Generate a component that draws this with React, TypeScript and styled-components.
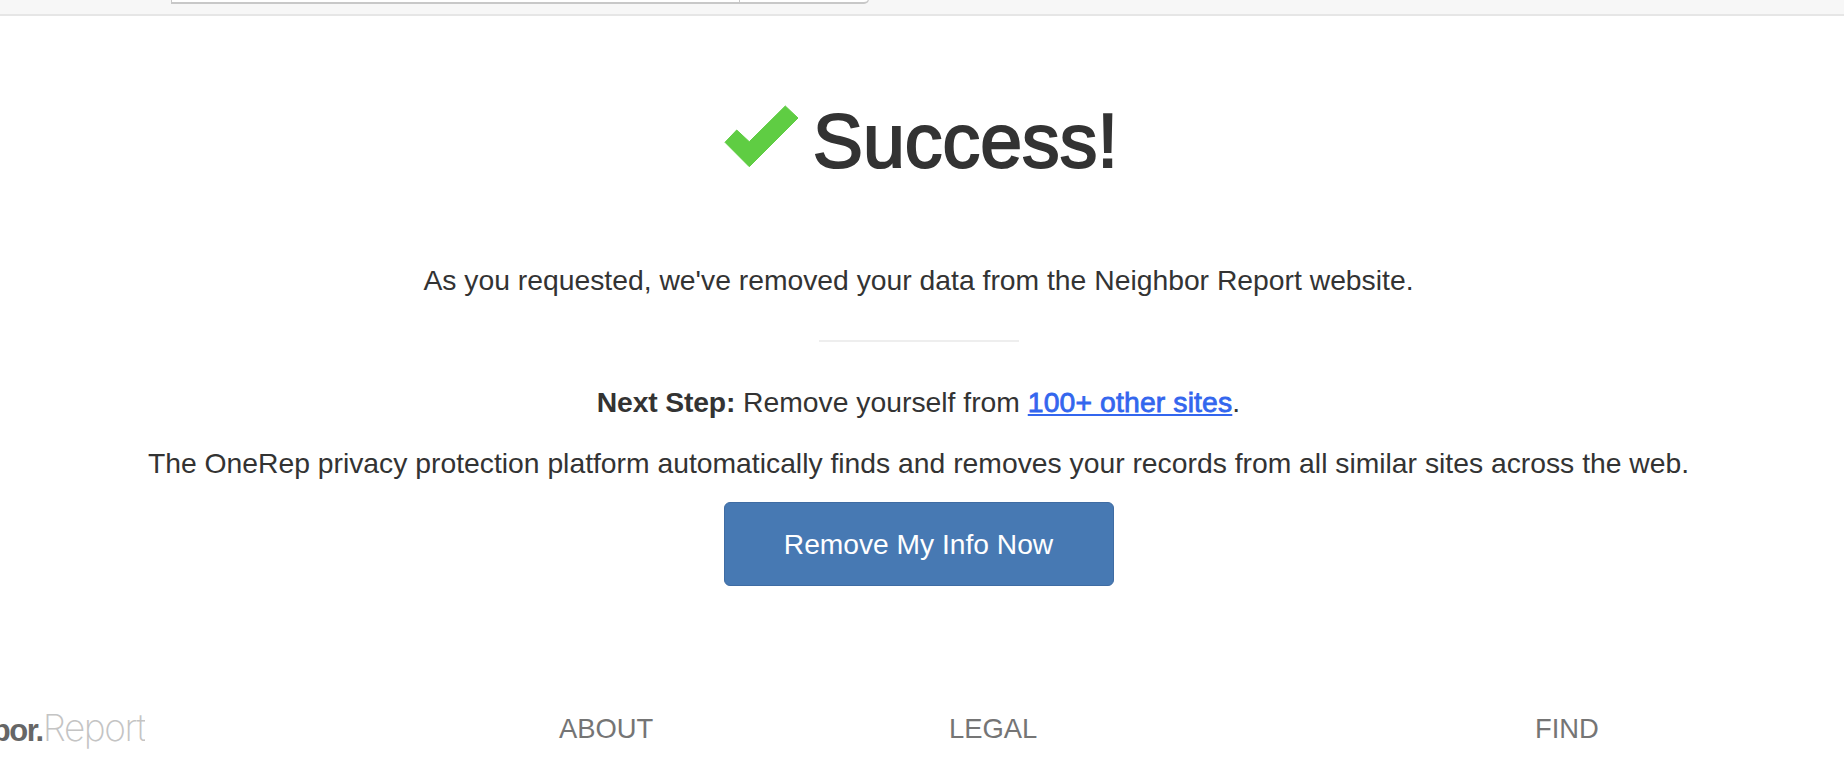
import React from "react";
import styled, { createGlobalStyle } from "styled-components";

const Global = createGlobalStyle`
  html, body { margin: 0; padding: 0; background: #fff; overflow: hidden; }
  body { font-family: "Liberation Sans", Arial, sans-serif; color: #333; }
`;

const Page = styled.div`
  width: 1844px;
  height: 768px;
  overflow: hidden;
  display: flex;
  flex-direction: column;
`;

const BrowserBar = styled.div`
  height: 14px;
  flex: none;
  background: #f7f7f7;
  border-bottom: 2px solid #e6e6e6;
  padding-left: 171px;
`;

const AddressBox = styled.div`
  width: 698px;
  height: 5px;
  box-sizing: border-box;
  margin-top: -1px;
  background: #fff;
  border: 1px solid #c8c8c8;
  border-top: none;
  border-bottom-width: 2px;
  border-radius: 0 0 5px 0;
  padding-left: 567px;
`;

const AddressDivider = styled.div`
  width: 1px;
  height: 100%;
  background: #c8c8c8;
`;

const Main = styled.main`
  width: 1837px;
  display: flex;
  flex-direction: column;
  align-items: center;
`;

const Heading = styled.h1`
  margin: 87px 0 0;
  padding-left: 6px;
  height: 76px;
  display: flex;
  align-items: center;
  gap: 15px;
  font-size: 75.3px;
  line-height: 76px;
  font-weight: 400;
  color: #333;
  -webkit-text-stroke: 2px #333;
`;

const Check = styled.svg`
  width: 73px;
  height: 61px;
  flex: none;
  margin-bottom: 10px;
  overflow: visible;
`;

const Line = styled.p<{ $top: number }>`
  margin: ${(p) => p.$top}px 0 0;
  font-size: 28.3px;
  line-height: 34px;
  color: #333;
  white-space: nowrap;
`;

const Rule = styled.hr`
  width: 200px;
  height: 2px;
  margin: 43px 0 0;
  border: none;
  background: #eee;
`;

const Strong = styled.strong`
  font-weight: 700;
  letter-spacing: -0.15px;
`;

const SitesLink = styled.a`
  color: #3366ee;
  font-weight: 400;
  letter-spacing: 0.15px;
  -webkit-text-stroke: 0.8px #3366ee;
  text-decoration: underline;
`;

const RemoveButton = styled.button`
  width: 390px;
  height: 84px;
  margin-top: 22px;
  border: 1px solid #3f6ca3;
  border-radius: 6px;
  background: #4779b3;
  color: #fff;
  font-family: inherit;
  font-size: 28.2px;
`;

const Footer = styled.footer`
  margin-top: 123px;
  display: grid;
  grid-template-columns: 559px 390px 586px 1fr;
  align-items: center;
  height: 40px;
`;

const LogoClip = styled.div`
  width: 145px;
  display: flex;
  justify-content: flex-end;
  align-items: baseline;
  overflow: hidden;
  white-space: nowrap;
  margin-bottom: 3px;
`;

const LogoBold = styled.span`
  font-family: "Liberation Sans", Arial, sans-serif;
  font-size: 31px;
  font-weight: 700;
  letter-spacing: -1.5px;
  color: #666;
`;

const LogoLight = styled.span`
  font-family: "Inter", sans-serif;
  font-size: 37px;
  font-weight: 200;
  letter-spacing: -1.4px;
  color: #c4c4c4;
`;

const FooterTitle = styled.div`
  font-size: 27.4px;
  color: #757575;
  text-transform: uppercase;
`;

export default function App() {
  return (
    <Page>
      <Global />
      <BrowserBar>
        <AddressBox>
          <AddressDivider />
        </AddressBox>
      </BrowserBar>
      <Main>
        <Heading>
          <Check viewBox="0 0 73 61" aria-hidden="true">
            <path
              d="M60.3 0 L73 12 L24.3 60.7 L0 36.3 L11.7 24 L24.3 35.7 Z"
              fill="#5fcd43"
              stroke="#5fcd43"
              strokeWidth="1"
              strokeLinejoin="round"
            />
          </Check>
          Success!
        </Heading>
        <Line $top={84}>As you requested, we've removed your data from the Neighbor Report website.</Line>
        <Rule />
        <Line $top={43}>
          <Strong>Next Step:</Strong> Remove yourself from <SitesLink href="#">100+ other sites</SitesLink>.
        </Line>
        <Line $top={27}>
          The OneRep privacy protection platform automatically finds and removes your records from all similar sites across the web.
        </Line>
        <RemoveButton>Remove My Info Now</RemoveButton>
      </Main>
      <Footer>
        <LogoClip>
          <LogoBold>Neighbor.</LogoBold>
          <LogoLight>Report</LogoLight>
        </LogoClip>
        <FooterTitle>About</FooterTitle>
        <FooterTitle>Legal</FooterTitle>
        <FooterTitle>Find</FooterTitle>
      </Footer>
    </Page>
  );
}
